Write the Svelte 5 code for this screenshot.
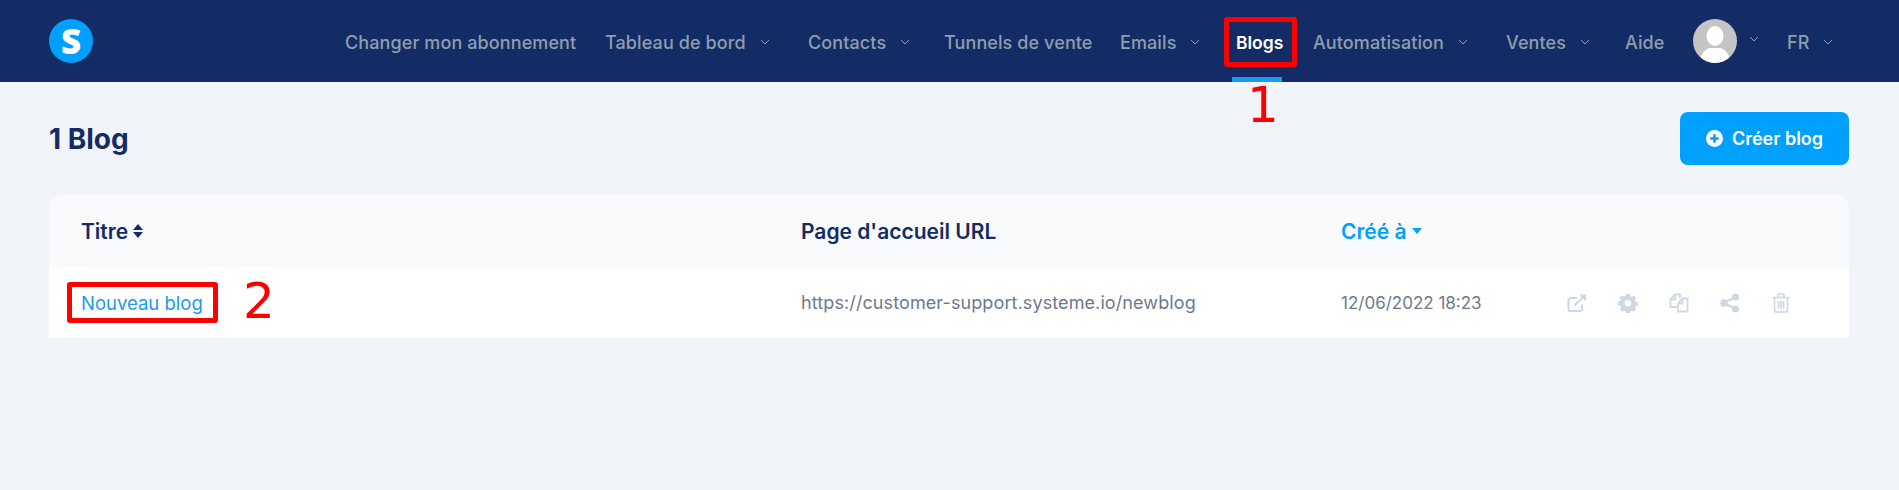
<script>
  const nav = [
    { t: 'Changer mon abonnement', w: 260 },
    { t: 'Tableau de bord', c: true, w: 203 },
    { t: 'Contacts', c: true, w: 136 },
    { t: 'Tunnels de vente', w: 176 },
    { t: 'Emails', c: true, w: 116 },
    { t: 'Blogs', active: true, w: 77 },
    { t: 'Automatisation', c: true, w: 193 },
    { t: 'Ventes', c: true, w: 119 },
    { t: 'Aide', w: 68 }
  ];
</script>

<div class="page">
  <header class="top">
    <div class="logo"><span>S</span></div>
    <nav class="menu">
      {#each nav as n}
        <a class="item" class:active={n.active} style="width:{n.w}px">
          {n.t}
          {#if n.c}
            <svg class="chev" viewBox="0 0 10 6"><path d="M1 1l4 4 4-4" /></svg>
          {/if}
        </a>
      {/each}
      <div class="avatar">
        <svg viewBox="0 0 44 44">
          <rect width="44" height="44" fill="#c4c4c4" />
          <ellipse cx="22" cy="17" rx="8.500" ry="10" fill="#fff" />
          <path d="M7 44c0-9 4-13 10-15h10c6 2 10 6 10 15z" fill="#fff" />
        </svg>
      </div>
      <svg class="chev after-avatar" viewBox="0 0 10 6"><path d="M1 1l4 4 4-4" /></svg>
      <a class="item lang">
        FR
        <svg class="chev" viewBox="0 0 10 6"><path d="M1 1l4 4 4-4" /></svg>
      </a>
    </nav>
  </header>

  <main class="content">
    <div class="head">
      <h1>1 Blog</h1>
      <button class="create">
        <svg viewBox="0 0 16 16"><circle cx="8" cy="8" r="8" fill="#fff" /><path d="M8 4v8M4 8h8" stroke="#00a0ff" stroke-width="2.4" /></svg>
        Créer blog
      </button>
    </div>

    <section class="table">
      <div class="row thead">
        <div class="c1 cell-flex">Titre
          <svg class="sort" viewBox="0 0 10 14"><path d="M5 0l5 6H0zM5 14L0 8h10z" fill="#142c65" /></svg>
        </div>
        <div class="c2">Page d'accueil URL</div>
        <div class="c3 sorted cell-flex">Créé à
          <svg class="sort caret" viewBox="0 0 10 6"><path d="M5 6L0 0h10z" fill="#00a0ff" /></svg>
        </div>
      </div>
      <div class="row tbody">
        <div class="c1"><a class="link">Nouveau blog</a></div>
        <div class="c2 url">https://customer-support.systeme.io/newblog</div>
        <div class="c3 date">12/06/2022 18:23</div>
        <div class="actions">
          <svg viewBox="0 0 20 20" fill="none" stroke="#ced8e5" stroke-width="2"><path d="M15 11.500V16a2 2 0 0 1-2 2H3.500a2 2 0 0 1-2-2V7a2 2 0 0 1 2-2H10" /><path d="M7.500 12.500L17 3" /><path d="M12 1.500h7v7" fill="#ced8e5" stroke="none" /></svg>
          <svg viewBox="0 0 20 20"><path fill="#ced8e5" fill-rule="evenodd" d="M8.300 1h3.400l.5 2.300 1.500.6 2-1.300 2.400 2.400-1.300 2 .6 1.500 2.300.5v3.400l-2.300.5-.6 1.500 1.300 2-2.400 2.400-2-1.300-1.500.6-.5 2.300H8.300l-.5-2.300-1.500-.6-2 1.300-2.400-2.400 1.300-2-.6-1.500L0 12V8.600l2.300-.5.6-1.500-1.300-2L4 2.200l2 1.300 1.500-.6zM10 7a3.300 3.300 0 1 0 0 6.600A3.300 3.300 0 0 0 10 7z" /></svg>
          <svg viewBox="0 0 20 20" fill="none" stroke="#ced8e5" stroke-width="1.800"><path d="M8 14H1.500V6.500L6 1.500h5v4" /><path d="M6 1.500v5H1.500" /><path d="M9 10.500l4.500-5h5v13H9z" /><path d="M13.500 5.500v5H9" /></svg>
          <svg viewBox="0 0 20 20"><g fill="#ced8e5"><circle cx="4" cy="10" r="3.800" /><circle cx="15.500" cy="4" r="3.500" /><circle cx="15.500" cy="16" r="3.500" /></g><path d="M4 10L15.500 4M4 10l11.500 6" stroke="#ced8e5" stroke-width="2" /></svg>
          <svg viewBox="0 0 20 20" fill="none" stroke="#ced8e5" stroke-width="1.700"><path d="M3.500 5v12a2 2 0 0 0 2 2h9a2 2 0 0 0 2-2V5M1.500 4.500h17M7 4.500V2a1 1 0 0 1 1-1h4a1 1 0 0 1 1 1v2.500M7.500 8v7.500M10 8v7.500M12.500 8v7.500" /></svg>
        </div>
      </div>
    </section>
  </main>

  <div class="mark box-a"></div>
  <div class="mark-num num-a">1</div>
  <div class="mark box-b"></div>
  <div class="mark-num num-b">2</div>
</div>

<style>
  :global(body) {
    margin: 0;
    background: #f1f4f9;
  }
  .page {
    position: relative;
    height: 490px;
    overflow: hidden;
    font-family: Inter, "Open Sans", sans-serif;
  }
  .top {
    height: 82px;
    background: #142c65;
    display: flex;
    align-items: center;
    padding-left: 49px;
  }
  .logo {
    width: 44px;
    height: 44px;
    border-radius: 50%;
    background: #00a0ff;
    display: flex;
    align-items: center;
    justify-content: center;
  }
  .logo span {
    color: #fff;
    font: 800 35px "Open Sans", sans-serif;
    line-height: 44px;
  }
  .menu {
    margin-left: 252px;
    display: flex;
    align-items: center;
    height: 82px;
  }
  .item {
    box-sizing: border-box;
    height: 82px;
    padding-top: 2px;
    display: flex;
    align-items: center;
    color: #8d9fab;
    font-size: 18px;
    font-weight: 500;
    letter-spacing: 0.1px;
    white-space: nowrap;
    position: relative;
  }
  .item.active {
    color: #fff;
    font-weight: 600;
    letter-spacing: 0;
    font-size: 17.500px;
  }
  .item.active::after {
    content: '';
    position: absolute;
    left: -4px;
    right: 31px;
    bottom: 0;
    height: 5px;
    background: #1a9bf0;
  }
  .chev {
    width: 10px;
    height: 6px;
    margin-left: 14px;
    fill: none;
    stroke: #8d9fab;
    stroke-width: 1;
  }
  .avatar {
    width: 44px;
    height: 44px;
    border-radius: 50%;
    overflow: hidden;
  }
  .avatar svg {
    display: block;
    width: 44px;
    height: 44px;
  }
  .after-avatar {
    margin-left: 12px;
    margin-top: -4px;
  }
  .lang {
    padding-left: 28px;
  }
  .content {
    padding: 0 50px 0 49px;
  }
  .head {
    height: 113px;
    display: flex;
    justify-content: space-between;
    align-items: center;
  }
  h1 {
    margin: 0;
    font: 700 28px Inter, sans-serif;
    color: #142c65;
  }
  .create {
    width: 169px;
    height: 53px;
    border: 0;
    border-radius: 8px;
    background: #00a0ff;
    color: #fff;
    font: 600 18px Inter, sans-serif;
    display: flex;
    align-items: center;
    justify-content: center;
    gap: 9px;
  }
  .create svg {
    width: 17px;
    height: 17px;
  }
  .table {
    border-radius: 14px 14px 0 0;
    overflow: hidden;
  }
  .row {
    display: flex;
    align-items: center;
  }
  .thead {
    height: 72px;
    background: #f9fafc;
    color: #142c65;
    font: 600 21px Inter, sans-serif;
  }
  .tbody {
    height: 71px;
    background: #fff;
    color: #6b7a8e;
    font: 400 18px Inter, sans-serif;
  }
  .c1 {
    width: 752px;
    padding-left: 32px;
    box-sizing: border-box;
  }
  .c2 {
    width: 540px;
  }
  .url {
    letter-spacing: 0.1px;
  }
  .c3 {
    width: 226px;
    white-space: nowrap;
  }
  .cell-flex {
    display: flex;
    align-items: center;
    gap: 5px;
  }
  .date {
    font-size: 17px;
  }
  .sorted {
    color: #00a0ff;
  }
  .sort {
    width: 10px;
    height: 14px;
  }
  .caret {
    height: 6px;
    width: 10px;
  }
  .link {
    color: #1a9bf0;
    font-size: 18.500px;
  }
  .actions {
    display: flex;
    gap: 31px;
    align-items: center;
  }
  .actions svg {
    width: 20px;
    height: 20px;
  }
  .mark {
    position: absolute;
    border: 5px solid #f00;
    border-radius: 3px;
    box-sizing: border-box;
  }
  .box-a {
    left: 1224px;
    top: 17px;
    width: 73px;
    height: 50px;
  }
  .box-b {
    left: 67px;
    top: 282px;
    width: 151px;
    height: 41px;
  }
  .mark-num {
    position: absolute;
    color: #f00;
    font: 400 50px "DejaVu Sans", sans-serif;
    line-height: 50px;
  }
  .num-a {
    left: 1247px;
    top: 80px;
  }
  .num-b {
    left: 243px;
    top: 276px;
  }
</style>
